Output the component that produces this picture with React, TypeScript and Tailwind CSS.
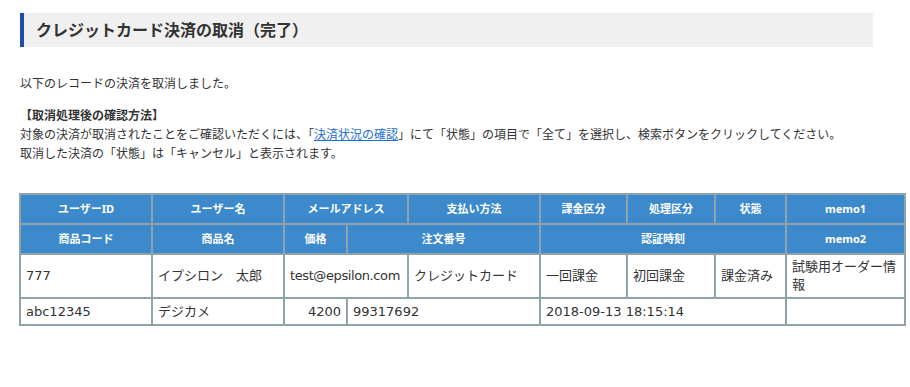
import React from 'react';

const th = 'border-2 border-[#8ea3ab] bg-[#3c89cb] text-white text-[11px] font-bold text-center h-[30px] p-0';
const td = "border-2 border-[#8ea3ab] bg-white text-[13px] text-[#333] px-[5px] py-[3px] leading-[18px] align-middle font-['DejaVu_Sans','Noto_Sans_CJK_JP',sans-serif]";

export default function App() {
    return (
        <div className="min-h-[387px] bg-white pt-[13px] font-['Noto_Sans','Noto_Sans_CJK_JP',sans-serif] text-[#333]">
            <div className="ml-[20px] w-[853px] h-[34px] bg-[#f0f0f0] border-l-[4px] border-[#1d4fa8] flex items-center pl-[12px]">
                <h1 className="text-[16px] font-bold text-[#333] leading-none">クレジットカード決済の取消（完了）</h1>
            </div>

            <div className="ml-[20px] mt-[27px] text-[12px] leading-[19px]">
                <p>以下のレコードの決済を取消しました。</p>
                <p className="mt-[13px] font-bold">【取消処理後の確認方法】</p>
                <p>
                    対象の決済が取消されたことをご確認いただくには、「<a href="#" className="text-[#1b6fcf] underline">決済状況の確認</a>」にて「状態」の項目で「全て」を選択し、検索ボタンをクリックしてください。
                </p>
                <p>取消した決済の「状態」は「キャンセル」と表示されます。</p>
            </div>

            <table className="ml-[19px] mt-[30px] w-[885px] table-fixed border-collapse">
                <colgroup>
                    <col className="w-[132px]" />
                    <col className="w-[132px]" />
                    <col className="w-[63px]" />
                    <col className="w-[61px]" />
                    <col className="w-[132px]" />
                    <col className="w-[87px]" />
                    <col className="w-[88px]" />
                    <col className="w-[71px]" />
                    <col className="w-[119px]" />
                </colgroup>
                <thead>
                    <tr>
                        <th className={th}>ユーザーID</th>
                        <th className={th}>ユーザー名</th>
                        <th className={th} colSpan={2}>メールアドレス</th>
                        <th className={th}>支払い方法</th>
                        <th className={th}>課金区分</th>
                        <th className={th}>処理区分</th>
                        <th className={th}>状態</th>
                        <th className={th}>memo1</th>
                    </tr>
                    <tr>
                        <th className={th}>商品コード</th>
                        <th className={th}>商品名</th>
                        <th className={th}>価格</th>
                        <th className={th} colSpan={2}>注文番号</th>
                        <th className={th} colSpan={3}>認証時刻</th>
                        <th className={th}>memo2</th>
                    </tr>
                </thead>
                <tbody>
                    <tr className="h-[42px]">
                        <td className={td}>777</td>
                        <td className={td}>イプシロン　太郎</td>
                        <td className={td + ' tracking-[-0.4px]'} colSpan={2}>test@epsilon.com</td>
                        <td className={td}>クレジットカード</td>
                        <td className={td}>一回課金</td>
                        <td className={td}>初回課金</td>
                        <td className={td}>課金済み</td>
                        <td className={td}>試験用オーダー情報</td>
                    </tr>
                    <tr className="h-[27px]">
                        <td className={td}>abc12345</td>
                        <td className={td}>デジカメ</td>
                        <td className={td + ' text-right'}>4200</td>
                        <td className={td} colSpan={2}>99317692</td>
                        <td className={td} colSpan={3}>2018-09-13 18:15:14</td>
                        <td className={td}></td>
                    </tr>
                </tbody>
            </table>
        </div>
    );
}
